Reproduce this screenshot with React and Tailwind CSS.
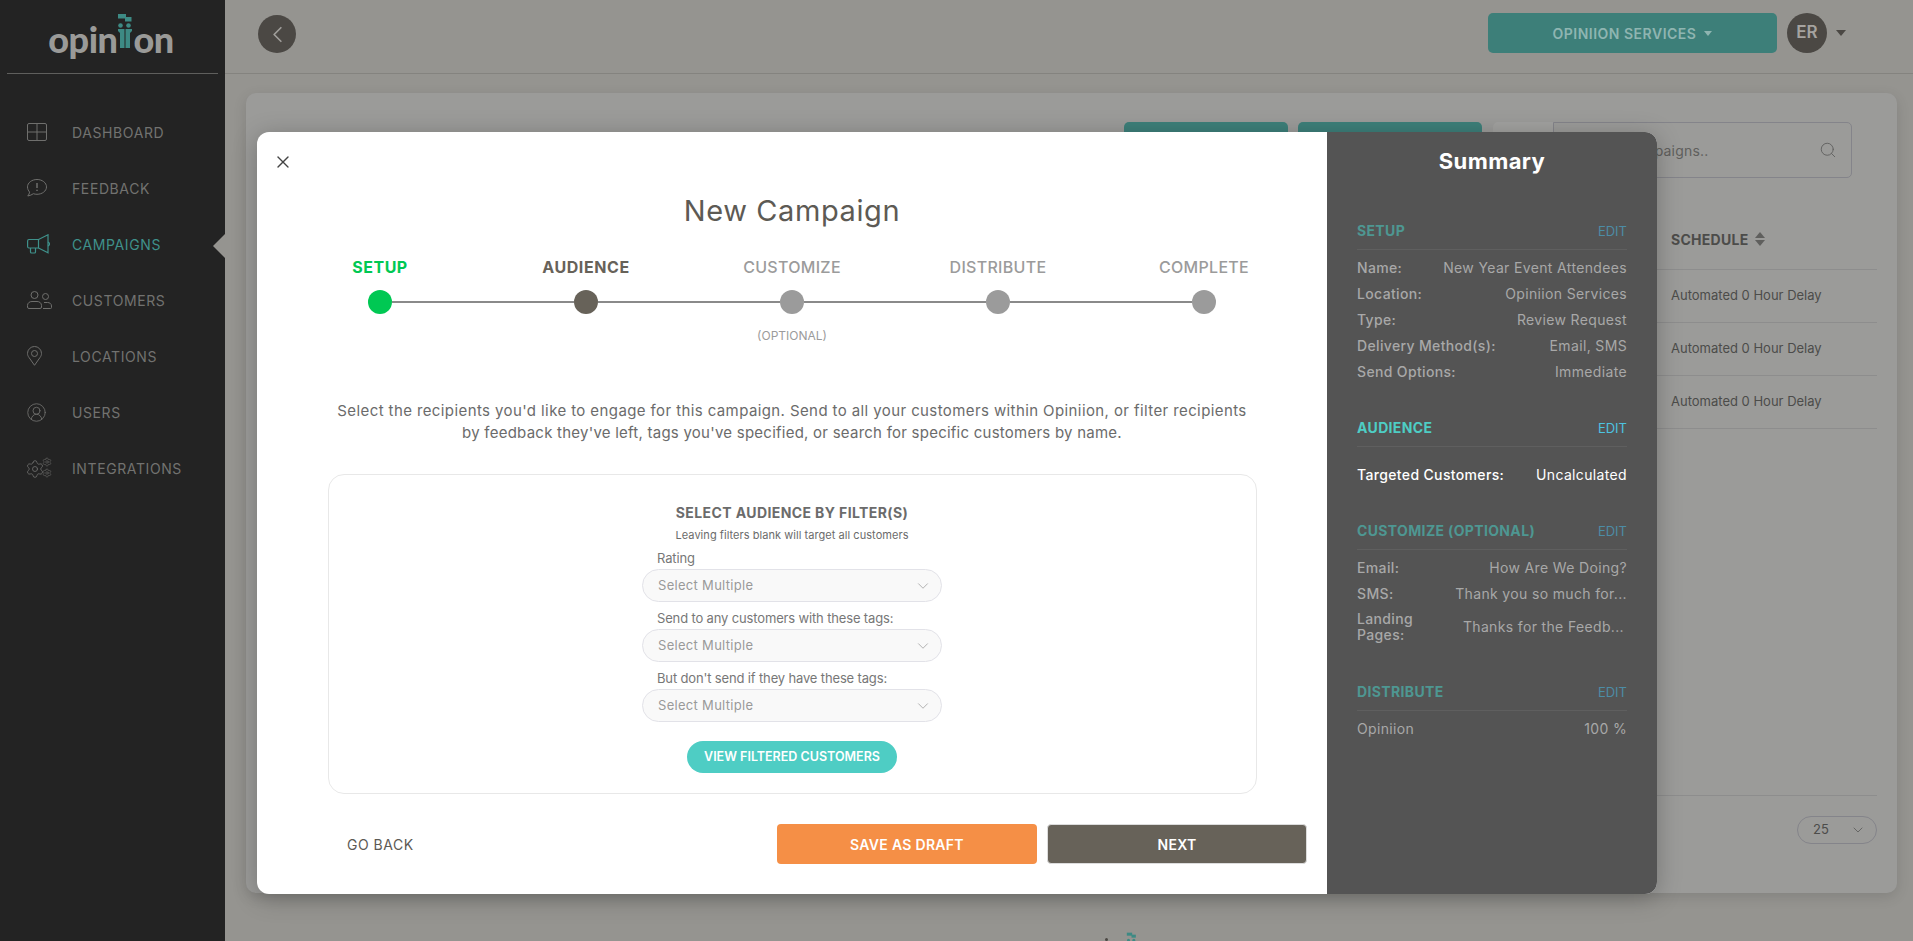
import { ChevronDown, ChevronLeft, Search, X, CircleUserRound, Settings } from 'lucide-react'

const DIVIDER = 'border-b border-[#5f5f5f]'

function GridIcon() {
  return (
    <svg width="20" height="18" viewBox="0 0 20 18" fill="none" stroke="currentColor" strokeWidth="1">
      <rect x="0.5" y="0.5" width="19" height="17" rx="1.5" />
      <path d="M10 .5v17M.5 9h19" />
    </svg>
  )
}

function FeedbackIcon() {
  return (
    <svg width="20" height="18" viewBox="0 0 20 18" fill="none" stroke="currentColor" strokeWidth="1">
      <path d="M10 .5c5.2 0 9.5 3.3 9.5 7.4s-4.3 7.4-9.5 7.4c-1.3 0-2.5-.2-3.6-.6-1.5 1-3.3 1.900-5.600 2.300 1-1.200 1.600-2.600 1.800-3.900C1.300 11.700.500 9.900.500 7.900.500 3.800 4.800.500 10 .500z" />
      <path d="M10 4v5M10 10.800v1.200" strokeWidth="1.500" />
    </svg>
  )
}

function MegaphoneIcon() {
  return (
    <svg width="23" height="20" viewBox="0 0 23 20" fill="none" stroke="currentColor" strokeWidth="1.200">
      <path d="M2 5.500h9.500V14H2A1.500 1.500 0 0 1 .6 12.500v-5.500A1.500 1.500 0 0 1 2 5.500z" />
      <path d="M11.500 5.500 21 .8v18L11.500 14" />
      <path d="M3.500 14v4a1 1 0 0 0 1 1h3a1 1 0 0 0 1-1v-4" />
      <path d="M21 8c1 .5 1.500 1 1.500 2s-.5 1.500-1.500 2" />
    </svg>
  )
}

function CustomersIcon() {
  return (
    <svg width="25" height="18" viewBox="0 0 25 18" fill="none" stroke="currentColor" strokeWidth="1">
      <circle cx="7.500" cy="4" r="3.500" />
      <path d="M2 17.500h11a1.500 1.500 0 0 0 1.500-1.500v-1.500c0-2.500-2-4-4.500-4H5c-2.500 0-4.500 1.500-4.500 4V16A1.500 1.500 0 0 0 2 17.500z" />
      <circle cx="18.500" cy="5.500" r="3" />
      <path d="M17 11.500h3.500c2.200 0 4 1.300 4 3.500v1.500a1 1 0 0 1-1 1H16" />
    </svg>
  )
}

function PinIcon() {
  return (
    <svg width="15" height="20" viewBox="0 0 15 20" fill="none" stroke="currentColor" strokeWidth="1">
      <path d="M7.500 19.300 2 11.500C1 10.200.5 8.900.5 7.500a7 7 0 0 1 14 0c0 1.400-.5 2.700-1.500 4z" />
      <circle cx="7.500" cy="7.500" r="3" />
    </svg>
  )
}

function GearsIcon() {
  return (
    <span className="flex relative w-[25px] h-[20px]">
      <Settings size={20} strokeWidth={1} className="-ml-[2px] mt-[1px]" />
      <Settings size={10} strokeWidth={1.300} className="absolute right-0 -top-[1px]" />
      <Settings size={10} strokeWidth={1.300} className="absolute right-0 bottom-0" />
    </span>
  )
}

const NAV = [
  { label: 'DASHBOARD', icon: <GridIcon /> },
  { label: 'FEEDBACK', icon: <FeedbackIcon /> },
  { label: 'CAMPAIGNS', icon: <MegaphoneIcon />, active: true },
  { label: 'CUSTOMERS', icon: <CustomersIcon /> },
  { label: 'LOCATIONS', icon: <PinIcon /> },
  { label: 'USERS', icon: <CircleUserRound size={21} strokeWidth={1} className="-ml-[1px]" /> },
  { label: 'INTEGRATIONS', icon: <GearsIcon /> },
]

const SUMMARY = [
  {
    title: 'SETUP',
    rows: [
      ['Name:', 'New Year Event Attendees'],
      ['Location:', 'Opiniion Services'],
      ['Type:', 'Review Request'],
      ['Delivery Method(s):', 'Email, SMS'],
      ['Send Options:', 'Immediate'],
    ],
  },
  { title: 'AUDIENCE', active: true, rows: [['Targeted Customers:', 'Uncalculated']] },
  {
    title: 'CUSTOMIZE (OPTIONAL)',
    rows: [
      ['Email:', 'How Are We Doing?'],
      ['SMS:', 'Thank you so much for...'],
      ['Landing Pages:', 'Thanks for the Feedb...'],
    ],
  },
  { title: 'DISTRIBUTE', rows: [['Opiniion', '100 %']], plain: true },
]

const STEPS = [
  { label: 'SETUP', text: 'text-[#00c853] font-bold tracking-[0.5px]', dot: 'bg-[#00c853]' },
  { label: 'AUDIENCE', text: 'text-[#676259] font-bold tracking-[0.6px]', dot: 'bg-[#676259]' },
  { label: 'CUSTOMIZE', text: 'text-[#9b9b9b] font-medium tracking-[0.3px]', dot: 'bg-[#9b9b9b]', note: '(OPTIONAL)' },
  { label: 'DISTRIBUTE', text: 'text-[#9b9b9b] font-medium tracking-[0.3px]', dot: 'bg-[#9b9b9b]' },
  { label: 'COMPLETE', text: 'text-[#9b9b9b] font-medium tracking-[0.3px]', dot: 'bg-[#9b9b9b]' },
]

const FILTERS = ['Rating', 'Send to any customers with these tags:', "But don't send if they have these tags:"]

function LogoFigures({ className }) {
  return (
    <svg className={className} viewBox="0 0 16 36" fill="#3d8a84">
      <rect x="1" y="1" width="8" height="4.500" />
      <rect x="8" y="4" width="6.500" height="4.500" />
      <circle cx="3.500" cy="12.500" r="2.300" />
      <circle cx="11.500" cy="12.500" r="2.300" />
      <path d="M1 16h6.500v19H3V20L1 18zM8.500 16H15v2l-2 2v15H8.500z" />
    </svg>
  )
}

function Sidebar() {
  return (
    <aside className="w-[225px] shrink-0 h-[941px] bg-[#232323] relative">
      <div className="mx-[7px] h-[74px] border-b border-[#5f5f5d] flex items-start justify-center pr-[3px]">
        <span className="text-[36px] leading-[40px] mt-[19px] font-black tracking-[-0.5px] text-[#9a9a98] font-[Lato,sans-serif]">opin</span>
        <LogoFigures className="w-[16px] h-[36px] mt-[13px]" />
        <span className="text-[36px] leading-[40px] mt-[19px] font-black tracking-[-0.5px] text-[#9a9a98] font-[Lato,sans-serif]">on</span>
      </div>
      <nav className="pt-[30px]">
        {NAV.map((item) => (
          <div
            key={item.label}
            className={`h-[56px] flex items-center pl-[27px] ${item.active ? 'text-[#3f918b]' : 'text-[#6f6f6d]'}`}
          >
            <span className="w-[45px] flex">{item.icon}</span>
            <span className={`text-[14px] tracking-[0.6px] ${item.active ? 'text-[#3f918b]' : 'text-[#727270]'}`}>{item.label}</span>
          </div>
        ))}
      </nav>
      <span className="absolute right-0 top-[234px] border-y-[12px] border-r-[12px] border-y-transparent border-r-[#959490]" />
    </aside>
  )
}

function Background() {
  return (
    <div className="flex-1 min-w-0 text-[#4c4c4a]">
      <header className="h-[74px] border-b border-[#84837f] flex items-start pt-[13px]">
        <button className="ml-[33px] mt-[2px] w-[38px] h-[38px] rounded-full bg-[#4b4844] text-[#a09e9b] flex items-center justify-center">
          <ChevronLeft size={27} strokeWidth={1.500} />
        </button>
        <button className="ml-auto w-[289px] h-[40px] rounded-[5px] bg-[#3d7f79] text-[#8fb5b1] text-[14px] font-semibold tracking-[0.5px] flex items-center justify-center gap-[8px]">
          OPINIION SERVICES
          <span className="border-x-[4px] border-t-[5px] border-x-transparent border-t-[#8fb5b1]" />
        </button>
        <span className="ml-[10px] w-[40px] h-[40px] rounded-full bg-[#4b4844] text-[#a5a3a0] text-[17px] font-semibold flex items-center justify-center">ER</span>
        <span className="ml-[9px] mt-[17px] mr-[67px] border-x-[5px] border-t-[6px] border-x-transparent border-t-[#4b4844]" />
      </header>

      <section className="ml-[21px] mt-[19px] w-[1651px] h-[800px] rounded-[10px] bg-[#9b9b99] shadow-[0_4px_14px_rgba(0,0,0,0.12)] flex flex-col pr-[20px]">
        <div className="flex justify-end pt-[29px] pr-[25px]">
          <span className="w-[164px] h-[56px] rounded-[5px] bg-[#3d7f79]" />
          <span className="ml-[10px] w-[184px] h-[56px] rounded-[5px] bg-[#3d7f79]" />
          <span className="ml-[11px] w-[60px] h-[56px] rounded-l-[5px] bg-[#a1a19f]" />
          <div className="w-[299px] h-[56px] rounded-r-[5px] border border-[#84848a] flex items-center pl-[20px] pr-[14px] text-[14px] tracking-[0.2px] text-[#5f5f5d]">
            Search campaigns..
            <Search size={18} strokeWidth={1.200} className="ml-auto" />
          </div>
        </div>
        <div className="ml-auto w-[400px] mt-[34px]">
          <div className="h-[58px] pb-[3px] pl-[194px] flex items-center gap-[6px] border-b border-[#8d8d8d] text-[14px] font-bold tracking-[0.02em]">
            SCHEDULE
            <span className="flex flex-col gap-[2px]">
              <span className="border-x-[5px] border-b-[6px] border-x-transparent border-b-[#5f5f5d]" />
              <span className="border-x-[5px] border-t-[6px] border-x-transparent border-t-[#5f5f5d]" />
            </span>
          </div>
          {[0, 1, 2].map((row) => (
            <div key={row} className="h-[53px] pl-[194px] flex items-center border-b border-[#8d8d8d] text-[13px]">
              Automated 0 Hour Delay
            </div>
          ))}
        </div>
        <div className="mt-auto mb-[49px] ml-auto w-[240px]">
          <div className="border-t border-[#8d8d8d] pt-[20px] flex justify-end">
            <div className="w-[80px] h-[28px] rounded-full border border-[#84848a] flex items-center pl-[15px] pr-[10px] text-[13px]">
              25
              <ChevronDown size={16} strokeWidth={1} className="ml-auto" />
            </div>
          </div>
        </div>
      </section>

      <div className="mt-[39px] pl-[880px] flex items-start gap-[18px] h-[16px]">
        <span className="mt-[6px] w-[3px] h-[3px] rounded-full bg-[#4b4844]" />
        <LogoFigures className="w-[11px] h-[24px]" />
      </div>
    </div>
  )
}

function Stepper() {
  return (
    <div className="grid grid-cols-5 w-[1030px] mx-auto mt-[29px]">
      {STEPS.map((step, i) => (
        <div key={step.label} className="flex flex-col items-center">
          <span className={`h-[20px] text-[16px] leading-[20px] ${step.text}`}>{step.label}</span>
          <div className="w-full flex items-center mt-[13px]">
            <span className={`flex-1 h-[2px] ${i > 0 ? 'bg-[#8a8a8a]' : ''}`} />
            <span className={`w-[24px] h-[24px] rounded-full ${step.dot}`} />
            <span className={`flex-1 h-[2px] ${i < STEPS.length - 1 ? 'bg-[#8a8a8a]' : ''}`} />
          </div>
          {step.note && <span className="mt-[14px] text-[12px] leading-[16px] text-[#9b9b9b]">{step.note}</span>}
        </div>
      ))}
    </div>
  )
}

function FilterBox() {
  return (
    <div className="w-[929px] h-[320px] mx-auto mt-[30px] rounded-[16px] border border-[#e8e8e8] flex flex-col items-center pt-[29px]">
      <h3 className="text-[14px] leading-[18px] font-bold tracking-[0.4px] text-[#6b6b6b]">SELECT AUDIENCE BY FILTER(S)</h3>
      <p className="mt-[6px] text-[11px] leading-[14px] tracking-[0.05px] text-[#6b6b6b]">Leaving filters blank will target all customers</p>
      {FILTERS.map((label) => (
        <div key={label} className="w-[300px] mt-[8px]">
          <div className="pl-[15px] text-[13px] leading-[16px] tracking-[-0.15px] text-[#777]">{label}</div>
          <div className="mt-[3px] h-[33px] rounded-full border border-[#e2e2e8] bg-[#f9f9f9] flex items-center pl-[15px] pr-[9px] text-[13px] tracking-[0.3px] text-[#9a9a9a]">
            Select Multiple
            <ChevronDown size={18} strokeWidth={1} className="ml-auto" />
          </div>
        </div>
      ))}
      <button className="mt-[19px] w-[210px] h-[32px] rounded-full bg-[#4ecdc4] text-white text-[12.500px] font-semibold">
        VIEW FILTERED CUSTOMERS
      </button>
    </div>
  )
}

function SummaryPanel() {
  return (
    <aside className="w-[330px] shrink-0 bg-[#545454] px-[30px] pt-[15px]">
      <h2 className="text-[22px] leading-[28px] font-bold tracking-[0.4px] text-white text-center">Summary</h2>
      <div className="mt-[47px] flex flex-col gap-[34px]">
        {SUMMARY.map((section) => (
          <div key={section.title}>
            <div className={`flex items-center justify-between pb-[9px] ${DIVIDER} text-[14px] leading-[18px]`}>
              <span className={`font-bold tracking-[0.35px] ${section.active ? 'text-[#4ecdc4]' : 'text-[#4e9792]'}`}>{section.title}</span>
              <span className={`text-[13px] ${section.active ? 'text-[#4dc3e0]' : 'text-[#4d8ca5]'}`}>EDIT</span>
            </div>
            <div className={section.active ? 'mt-[15px]' : 'mt-[5px]'}>
              {section.rows.map(([label, value]) => {
                const landing = label === 'Landing Pages:'
                return (
                  <div
                    key={label}
                    className={`min-h-[26px] flex items-center justify-between gap-[20px] text-[14px] leading-[16px] tracking-[0.35px] ${landing ? 'mb-[6px]' : ''} ${section.active ? 'text-white' : 'text-[#a8a8a8]'}`}
                  >
                    <span className={`${landing ? 'w-[70px] mt-[4px]' : ''} ${section.plain ? '' : 'font-medium'}`}>{label}</span>
                    <span className={`${landing ? 'mt-[4px] pr-[3px]' : ''} whitespace-nowrap`}>{value}</span>
                  </div>
                )
              })}
            </div>
          </div>
        ))}
      </div>
    </aside>
  )
}

export default function App() {
  return (
    <div className="relative w-[1913px] h-[941px] overflow-hidden flex bg-[#959490] font-[Inter,sans-serif]">
      <Sidebar />
      <Background />

      <div className="absolute left-[257px] top-[132px] w-[1400px] h-[762px] rounded-[12px] overflow-hidden flex bg-white shadow-[0_4px_24px_rgba(0,0,0,0.25)]">
        <main className="flex-1 min-w-0">
          <button className="block ml-[16px] mt-[20px] text-[#444]">
            <X size={20} strokeWidth={1.600} />
          </button>
          <h1 className="mt-[22px] text-[29px] leading-[34px] tracking-[0.6px] text-center text-[#5d5a54]">New Campaign</h1>
          <Stepper />
          <p className="mt-[56px] h-[44px] text-[15px] leading-[22px] tracking-[0.4px] text-center text-[#6b6b6b]">
            Select the recipients you'd like to engage for this campaign. Send to all your customers within Opiniion, or filter recipients
            <br />
            <span className="tracking-[0.24px]">by feedback they've left, tags you've specified, or search for specific customers by name.</span>
          </p>
          <FilterBox />
          <div className="w-[1030px] mx-auto mt-[30px] flex items-center justify-between pl-[70px]">
            <button className="text-[14px] tracking-[0.5px] text-[#5d5a54]">GO BACK</button>
            <div className="flex gap-[10px]">
              <button className="w-[260px] h-[40px] rounded-[4px] bg-[#f58f46] text-white text-[14px] font-semibold tracking-[0.3px]">SAVE AS DRAFT</button>
              <button className="w-[260px] h-[40px] rounded-[4px] bg-[#676259] border border-[#dcdcdc] text-white text-[14px] font-semibold tracking-[0.3px]">NEXT</button>
            </div>
          </div>
        </main>
        <SummaryPanel />
      </div>
    </div>
  )
}
